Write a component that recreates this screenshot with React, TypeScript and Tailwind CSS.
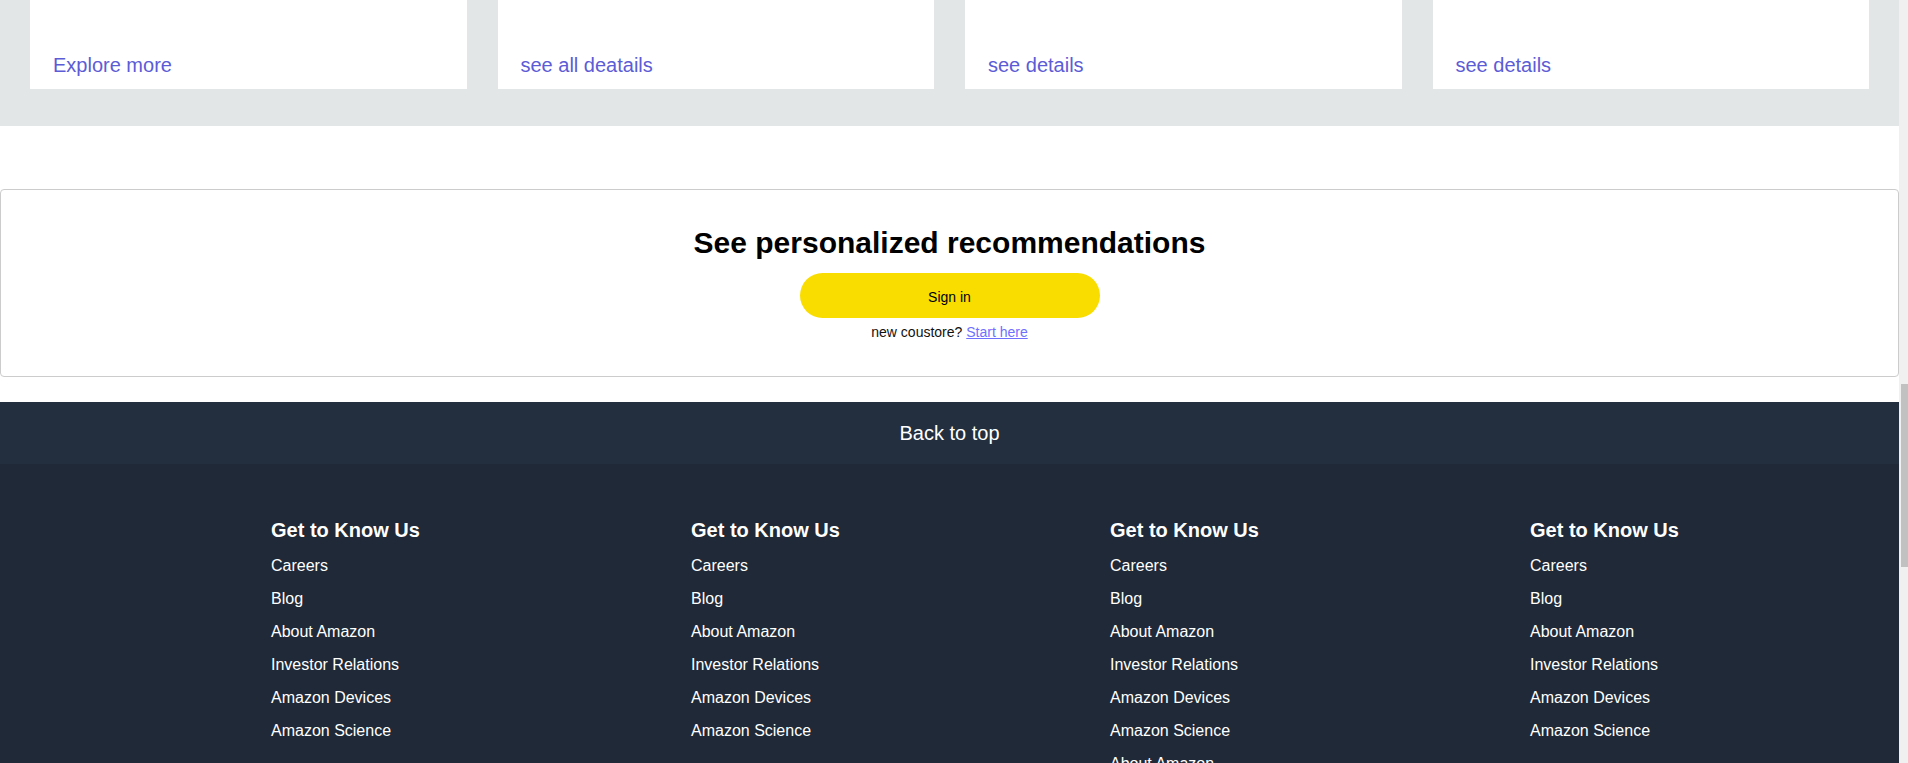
import React from "react";

const cards = ["Explore more", "see all deatails", "see details", "see details"];

const baseLinks = [
	"Careers",
	"Blog",
	"About Amazon",
	"Investor Relations",
	"Amazon Devices",
	"Amazon Science",
];

const columns = [
	{ title: "Get to Know Us", links: baseLinks },
	{ title: "Get to Know Us", links: baseLinks },
	{ title: "Get to Know Us", links: [...baseLinks, "About Amazon"] },
	{ title: "Get to Know Us", links: baseLinks },
];

export default function App() {
	return (
		<div
			className="flex h-[763px] w-full overflow-hidden bg-white"
			style={{ fontFamily: '"Liberation Sans", Arial, sans-serif' }}>
			<div className="flex-1 min-w-0">
				{/* cards strip */}
				<section className="bg-[#e3e6e6] px-[30px] pb-[37px]">
					<div className="grid grid-cols-4 gap-[31px]">
						{cards.map((label, i) => (
							<div
								key={i}
								className="h-[89px] bg-white px-[23px] pb-[10px] flex flex-col justify-end">
								<a className="text-xl leading-7 text-[#5c5cd6] cursor-pointer">
									{label}
								</a>
							</div>
						))}
					</div>
				</section>

				{/* sign in box */}
				<section className="mt-[63px] border border-[#cccccc] rounded-[4px] pt-[35px] pb-[34px] flex flex-col items-center">
					<h2 className="text-3xl leading-9 font-bold text-black">
						See personalized recommendations
					</h2>
					<button className="mt-[12px] w-[300px] h-[45px] pt-[2px] rounded-full bg-[#f9dd00] text-sm text-black">
						Sign in
					</button>
					<p className="mt-[4px] text-sm leading-5 text-[#111]">
						new coustore?{" "}
						<a className="text-[#7070ff] underline cursor-pointer">Start here</a>
					</p>
				</section>

				{/* footer */}
				<footer className="mt-[25px] bg-[#1f2937] text-white">
					<div className="bg-[#232f3e] py-[17px] text-center text-xl leading-7">
						Back to top
					</div>
					<div className="pt-[52px] pl-[271px] grid grid-cols-[420px_419px_420px_1fr]">
						{columns.map((col, i) => (
							<div key={i}>
								<h3 className="text-xl leading-7 font-bold mb-[10px]">
									{col.title}
								</h3>
								<ul className="flex flex-col gap-[9px]">
									{col.links.map((link, j) => (
										<li key={j} className="text-base leading-6">
											{link}
										</li>
									))}
								</ul>
							</div>
						))}
					</div>
				</footer>
			</div>

			{/* scrollbar */}
			<div className="w-[9px] shrink-0 bg-[#f0f0f0] pt-[384px]">
				<div className="ml-[2px] w-[7px] h-[183px] bg-[#c1c1c1]"></div>
			</div>
		</div>
	);
}
